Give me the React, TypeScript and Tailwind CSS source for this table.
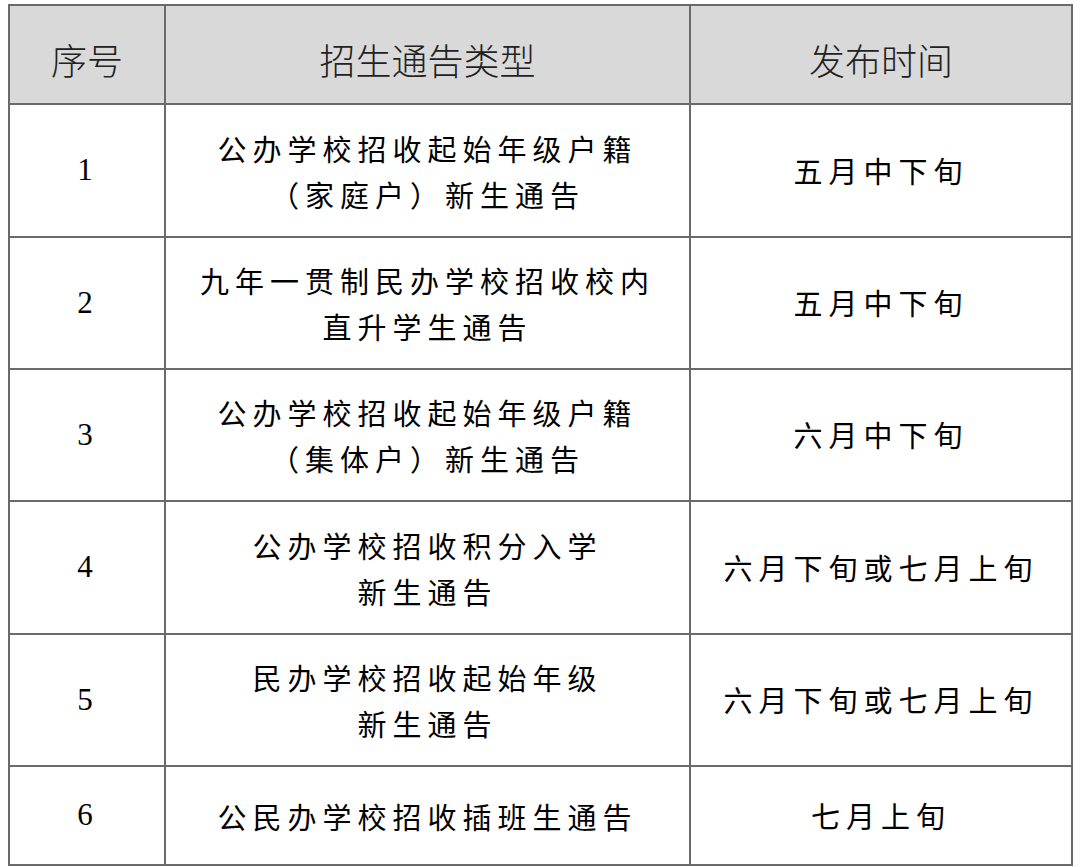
const rows = [
  { no: '1', type: ['公办学校招收起始年级户籍', '（家庭户）新生通告'], time: '五月中下旬', h: 'h-[133px]' },
  { no: '2', type: ['九年一贯制民办学校招收校内', '直升学生通告'], time: '五月中下旬', h: 'h-[132px]' },
  { no: '3', type: ['公办学校招收起始年级户籍', '（集体户）新生通告'], time: '六月中下旬', h: 'h-[132px]' },
  { no: '4', type: ['公办学校招收积分入学', '新生通告'], time: '六月下旬或七月上旬', h: 'h-[133px]' },
  { no: '5', type: ['民办学校招收起始年级', '新生通告'], time: '六月下旬或七月上旬', h: 'h-[132px]' },
  { no: '6', type: ['公民办学校招收插班生通告'], time: '七月上旬', h: 'h-[99px]' },
];

const cjk = "font-['Noto_Sans_CJK_SC',sans-serif]";

export default function App() {
  return (
    <div className="h-[867px] w-[1080px] bg-white pl-2 pt-1">
      <table className="w-[1065px] table-fixed border-collapse border-2 border-[#6a6a6a] text-black">
        <colgroup>
          <col className="w-[156px]" />
          <col className="w-[525px]" />
          <col />
        </colgroup>
        <thead>
          <tr className={`h-[99px] bg-[#d9d9d9] text-[36px] text-[#222] ${cjk}`}>
            <th className="border-2 border-[#6a6a6a] pt-2 font-light">序号</th>
            <th className="border-2 border-[#6a6a6a] pt-2 font-light">招生通告类型</th>
            <th className="border-2 border-[#6a6a6a] pt-2 font-light">发布时间</th>
          </tr>
        </thead>
        <tbody>
          {rows.map((r) => (
            <tr key={r.no} className={r.h}>
              <td className="border-2 border-[#6a6a6a] pr-1 text-center font-['Liberation_Serif',serif] text-[31px]">
                {r.no}
              </td>
              <td className={`border-2 border-[#6a6a6a] text-center text-[29px] leading-[46px] tracking-[6px] ${cjk}`}>
                {r.type.map((line) => (
                  <div key={line}>{line}</div>
                ))}
              </td>
              <td className={`border-2 border-l-[#333] border-[#6a6a6a] text-center text-[29px] tracking-[6px] ${cjk}`}>
                {r.time}
              </td>
            </tr>
          ))}
        </tbody>
      </table>
    </div>
  );
}
